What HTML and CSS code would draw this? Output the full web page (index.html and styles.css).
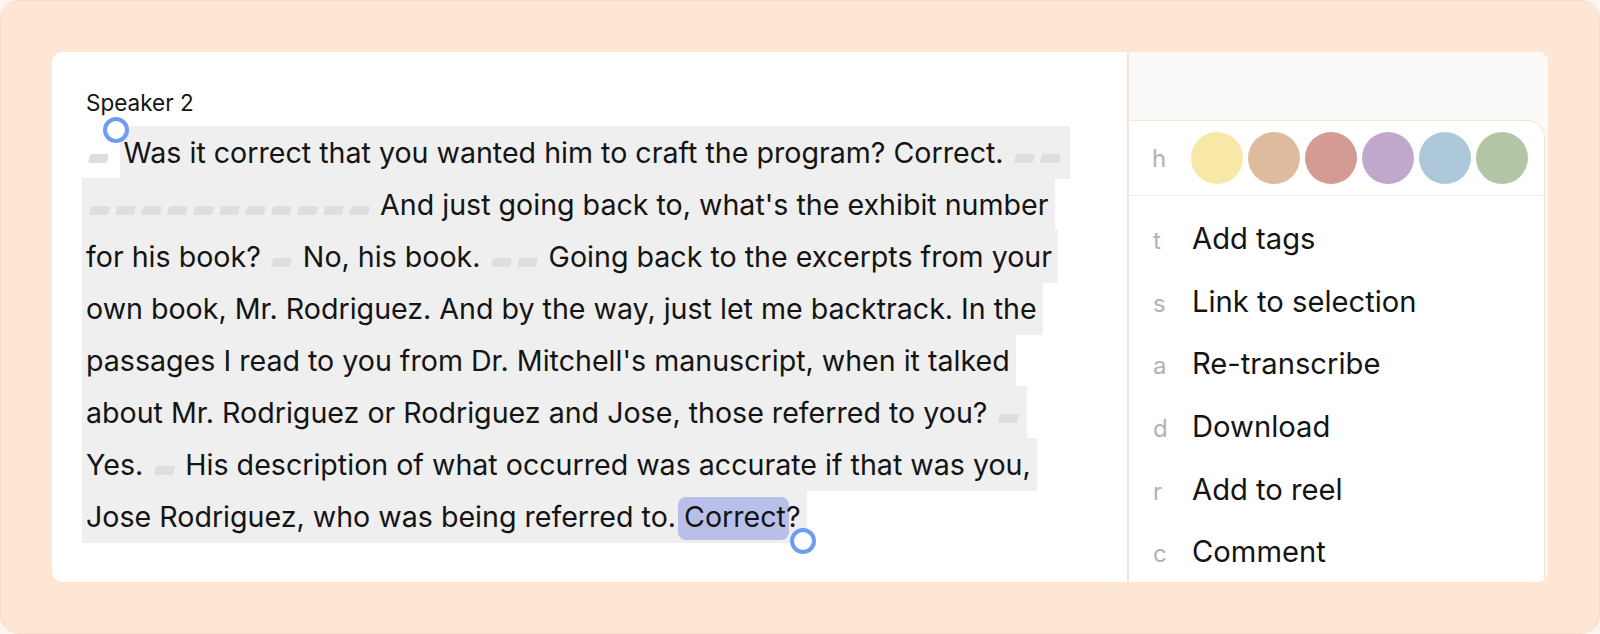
FILE: index.html
```html
<!DOCTYPE html>
<html>

<head>
    <title>Transcript selection</title>
    <link rel="stylesheet" href="styles.css">
</head>

<body>
    <div class="frame">
        <div class="card">
            <section class="transcript">
                <div class="speaker">Speaker 2</div>
                <p class="text"><span class="gap first"></span> <span class="sel">Was it correct that you wanted him to craft the program? Correct. <span class="gap"></span><span class="gap"></span><br><span class="gap"></span><span class="gap"></span><span class="gap"></span><span class="gap"></span><span class="gap"></span><span class="gap"></span><span class="gap"></span><span class="gap"></span><span class="gap"></span><span class="gap"></span><span class="gap"></span> And just going back to, what's the exhibit number<br>for his book? <span class="gap"></span> No, his book. <span class="gap"></span><span class="gap"></span> Going back to the excerpts from your<br>own book, Mr. Rodriguez. And by the way, just let me backtrack. In the<br>passages I read to you from Dr. Mitchell's manuscript, when it talked<br>about Mr. Rodriguez or Rodriguez and Jose, those referred to you? <span class="gap"></span><br>Yes. <span class="gap"></span> His description of what occurred was accurate if that was you,<br>Jose Rodriguez, who was being referred to. <span class="word-hl">Correct</span>?</span></p>
                <span class="handle start"></span>
                <span class="handle end"></span>
            </section>

            <aside class="panel">
                <div class="popup">
                    <div class="colors">
                        <span class="key">h</span>
                        <span class="swatch yellow"></span>
                        <span class="swatch tan"></span>
                        <span class="swatch rose"></span>
                        <span class="swatch purple"></span>
                        <span class="swatch blue"></span>
                        <span class="swatch green"></span>
                    </div>
                    <ul class="actions">
                        <li><span class="key">t</span>Add tags</li>
                        <li><span class="key">s</span>Link to selection</li>
                        <li><span class="key">a</span>Re-transcribe</li>
                        <li><span class="key">d</span>Download</li>
                        <li><span class="key">r</span>Add to reel</li>
                        <li><span class="key">c</span>Comment</li>
                    </ul>
                </div>
            </aside>
        </div>
    </div>
</body>

</html>
```

FILE: styles.css
```css
body {
    margin: 0;
    padding: 0;
    background: #fbf4ef;
    font-family: Inter, "Noto Sans", sans-serif;
    color: #141414;
}

.frame {
    box-sizing: border-box;
    width: 1600px;
    height: 634px;
    padding: 51px;
    background: #fde6d4;
    border: 1px solid #f6dac5;
    border-radius: 20px;
}

.card {
    display: flex;
    height: 100%;
    background: white;
    border-radius: 10px;
    overflow: hidden;
}

.transcript {
    position: relative;
    box-sizing: border-box;
    width: 1075px;
    flex-shrink: 0;
    padding: 37px 0 0 30px;
}

.speaker {
    margin-left: 4px;
    font-size: 22.5px;
    line-height: 28px;
    margin-bottom: 10px;
}

.text {
    margin: 0;
    font-size: 28.6px;
    line-height: 52px;
    white-space: nowrap;
}

.sel {
    background: #efefef;
    padding: 8.7px 6px 8.7px 4px;
    -webkit-box-decoration-break: clone;
    box-decoration-break: clone;
}

.gap {
    display: inline-block;
    width: 19px;
    height: 9px;
    margin: 0 3.5px;
    background: #dedede;
    border-radius: 2px;
    transform: skewX(-14deg);
}

.gap.first {
    margin-left: 7px;
}

.word-hl {
    background: #b8c0ea;
    padding: 2px 3px 6px 6px;
    margin: 0 -3px 0 -6px;
    border-radius: 8px;
}

.handle {
    position: absolute;
    box-sizing: border-box;
    width: 26px;
    height: 26px;
    border: 4.5px solid #6d9df2;
    border-radius: 50%;
    background: white;
}

.handle.start {
    left: 51px;
    top: 65px;
}

.handle.end {
    left: 738px;
    top: 476px;
}

.panel {
    flex-grow: 1;
    background: #fbfaf9;
    border-left: 2px solid #f6e5d8;
    padding: 68px 3px 0 0;
}

.popup {
    height: 100%;
    background: white;
    border: 1.5px solid #f6e4d6;
    border-left: none;
    border-bottom: none;
    border-top-right-radius: 18px;
}

.key {
    display: inline-block;
    width: 39px;
    color: #b2b2b2;
    font-size: 24px;
}

.colors {
    display: flex;
    align-items: center;
    gap: 5px;
    height: 74px;
    padding-left: 23px;
    border-bottom: 1px solid #f1eeeb;
}

.colors .key {
    width: 34px;
}

.swatch {
    width: 52px;
    height: 52px;
    border-radius: 50%;
}

.yellow { background: #f7e8a7; }
.tan { background: #dfbb9e; }
.rose { background: #d39b94; }
.purple { background: #c0a8cb; }
.blue { background: #adc9d9; }
.green { background: #b2c6a6; }

.actions {
    list-style: none;
    margin: 0;
    padding: 12px 0 0 24px;
}

.actions li {
    height: 62.7px;
    line-height: 62.7px;
    font-size: 29.2px;
}
```
